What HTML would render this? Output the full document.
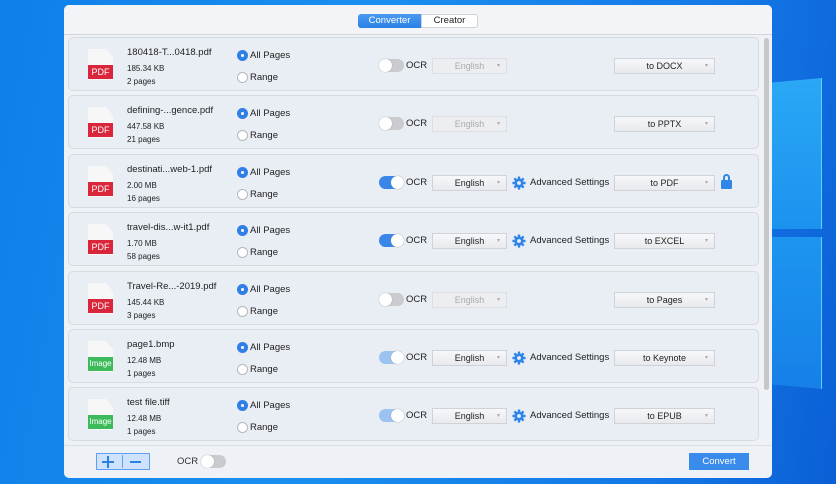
<!DOCTYPE html>
<html><head><meta charset="utf-8"><style>
*{margin:0;padding:0;box-sizing:border-box}
body{width:836px;height:484px;overflow:hidden;position:relative;font-family:"Liberation Sans",sans-serif;color:#222;
background:linear-gradient(100deg,#0f7fe8 0%,#1a8ff0 40%,#1478e6 80%,#0b5fd6 100%)}
.abs{position:absolute}
.win{left:64px;top:5px;width:708px;height:473px;background:#eef1f6;border-radius:5px}
.hdr{left:0;top:0;width:708px;height:30px;border-bottom:1px solid #d2d5da;background:#f2f4f7;border-radius:5px 5px 0 0}
.row{left:4px;width:691px;height:54px;background:#e9edf4;border:1px solid #d6dae1;border-radius:5px}
.t{position:absolute;font-size:9.5px;white-space:nowrap}
.s{font-size:8px}
.radio{position:absolute;width:11px;height:11px;border-radius:50%;background:#fff;border:1px solid #b5b8bd}
.radio.on{background:#2f7fe6;border-color:#2f7fe6}
.radio.on::after{content:"";position:absolute;left:3px;top:3px;width:3px;height:3px;border-radius:50%;background:#fff}
.tog{position:absolute;width:25px;height:13px;border-radius:7px;background:#c9cbcf}
.tog i{position:absolute;top:0;width:13px;height:13px;border-radius:50%;background:#fff;box-shadow:0 0 1px #888}
.tog.off i{left:0}
.tog.on{background:#3a86e8}.tog.on i{right:0}
.tog.dim{background:#9cc3f0}.tog.dim i{right:0}
.box{position:absolute;height:16px;background:linear-gradient(#f7f8fa,#e8eaee);border:1px solid #cfd2d7;font-size:9px;text-align:center;line-height:14px;color:#222}
.box.dis{color:#aaa;background:#eceef1;border-color:#dcdee2}
.box::after{content:"▾";position:absolute;right:6px;top:0;font-size:6px;color:#aaa}
.ic{position:absolute;width:25px;height:31px;background:#f7f7f7;clip-path:polygon(0 0,72% 0,100% 28%,100% 100%,0 100%)}
.ic b{position:absolute;left:0;bottom:1px;width:25px;height:14px;color:#fff;font-size:9px;font-weight:normal;text-align:center;line-height:14px}
.gear{position:absolute;width:14px;height:14px}
</style></head><body>
<div class="abs" style="left:772px;top:78px;width:50px;height:151px;background:linear-gradient(#2aa8f5,#1c92ef);border-right:1px solid #5fd0ff;clip-path:polygon(0 3%,100% 0,100% 100%,0 100%)"></div>
<div class="abs" style="left:772px;top:237px;width:50px;height:152px;background:linear-gradient(#1d95f0,#1680e8);border-right:1px solid #5fd0ff;clip-path:polygon(0 0,100% 0,100% 100%,0 97%)"></div>
<div class="abs win">
 <div class="abs hdr"></div>
 <div class="abs" style="left:294px;top:9px;width:63px;height:14px;background:linear-gradient(#4a9bf0,#2a80e6);color:#fff;font-size:9.5px;text-align:center;line-height:14px;border-radius:3px 0 0 3px">Converter</div>
 <div class="abs" style="left:357px;top:9px;width:57px;height:14px;background:#fff;border:1px solid #d0d3d8;font-size:9.5px;text-align:center;line-height:12px;border-radius:0 3px 3px 0">Creator</div>
 <div class="abs" style="left:700px;top:33px;width:5px;height:352px;background:#c6c7c9;border-radius:3px"></div>
 <div class="abs" style="left:0;top:440px;width:708px;height:1px;background:#dcdfe3"></div>
 <div class="abs" style="left:32px;top:448px;width:54px;height:17px;background:#cfe2fb;border:1px solid #5fa0ee"></div>
 <div class="abs" style="left:58px;top:450px;width:1px;height:13px;background:#5fa0ee"></div>
 <div class="abs" style="left:38px;top:456px;width:12px;height:1.5px;background:#2a7fe6"></div>
 <div class="abs" style="left:43.2px;top:450.8px;width:1.5px;height:12px;background:#2a7fe6"></div>
 <div class="abs" style="left:66px;top:456px;width:11px;height:1.5px;background:#2a7fe6"></div>
 <div class="t" style="left:113px;top:451px;font-size:9.5px;color:#333">OCR</div>
 <div class="tog off" style="left:137px;top:450px"><i></i></div>
 <div class="abs" style="left:625px;top:448px;width:60px;height:17px;background:#3a8cec;color:#fff;font-size:9.5px;text-align:center;line-height:17px">Convert</div>
</div>
<div id="rows"></div>
<script>
var d=[["180418-T...0418.pdf","185.34 KB","2 pages","PDF",0,"to DOCX",0],
["defining-...gence.pdf","447.58 KB","21 pages","PDF",0,"to PPTX",0],
["destinati...web-1.pdf","2.00 MB","16 pages","PDF",1,"to PDF",1],
["travel-dis...w-it1.pdf","1.70 MB","58 pages","PDF",1,"to EXCEL",0],
["Travel-Re...-2019.pdf","145.44 KB","3 pages","PDF",0,"to Pages",0],
["page1.bmp","12.48 MB","1 pages","Image",2,"to Keynote",0],
["test file.tiff","12.48 MB","1 pages","Image",2,"to EPUB",0]];
var h="";
var gear='<svg class="gear" viewBox="0 0 16 16"><g fill="#2f86e8"><circle cx="8" cy="8" r="5.2"/>'+
[0,45,90,135].map(a=>'<rect x="6.6" y="0.5" width="2.8" height="15" rx="0.6" transform="rotate('+a+' 8 8)"/>').join('')+
'</g><circle cx="8" cy="8" r="2.2" fill="#e9edf4"/></svg>';
d.forEach(function(r,i){
 var T=Math.round(37+i*58.4);
 h+='<div class="abs row" style="left:68px;top:'+T+'px"></div>';
 var col=r[3]=="PDF"?"#d9263a":"#3dbb5a";
 h+='<div class="ic" style="left:88px;top:'+(T+12)+'px"><b style="background:'+col+';font-size:'+(r[3]=="PDF"?9:8)+'px">'+r[3]+'</b></div>';
 h+='<div class="t" style="left:127px;top:'+(T+10)+'px">'+r[0]+'</div>';
 h+='<div class="t s" style="left:127px;top:'+(T+27)+'px">'+r[1]+'</div>';
 h+='<div class="t s" style="left:127px;top:'+(T+40)+'px">'+r[2]+'</div>';
 h+='<div class="radio on" style="left:237px;top:'+(T+13)+'px"></div><div class="t" style="left:250px;top:'+(T+13)+'px">All Pages</div>';
 h+='<div class="radio" style="left:237px;top:'+(T+35)+'px"></div><div class="t" style="left:250px;top:'+(T+35)+'px">Range</div>';
 var tc=r[4]==0?"off":(r[4]==1?"on":"dim");
 h+='<div class="tog '+tc+'" style="left:379px;top:'+(T+22)+'px"><i></i></div>';
 h+='<div class="t" style="left:406px;top:'+(T+23)+'px">OCR</div>';
 h+='<div class="box'+(r[4]==0?' dis':'')+'" style="left:432px;top:'+(T+21)+'px;width:75px">English</div>';
 if(r[4]){h+='<div style="position:absolute;left:512px;top:'+(T+22)+'px;width:14px;height:14px">'+gear+'</div>';
 h+='<div class="t" style="left:530px;top:'+(T+23)+'px">Advanced Settings</div>';}
 h+='<div class="box" style="left:614px;top:'+(T+21)+'px;width:101px">'+r[5]+'</div>';
 if(r[6]){h+='<div class="abs" style="left:723px;top:'+(T+20)+'px;width:7px;height:7px;border:2px solid #2f86e8;border-bottom:none;border-radius:4px 4px 0 0"></div><div class="abs" style="left:721px;top:'+(T+26)+'px;width:11px;height:9px;background:#2f86e8;border-radius:1px"></div>';}
});
document.getElementById("rows").innerHTML=h;
</script>
</body></html>
